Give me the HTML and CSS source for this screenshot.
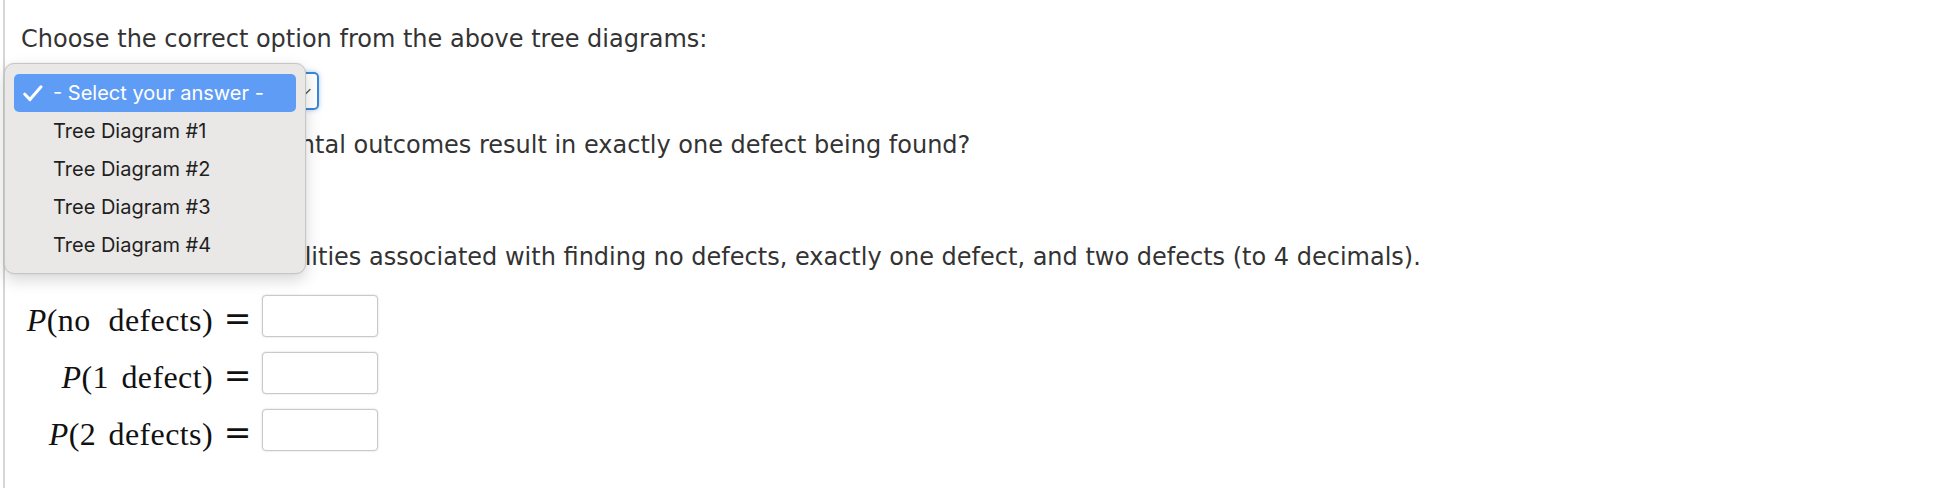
FILE: index.html
```html
<!DOCTYPE html>
<html lang="en">
<head>
<meta charset="utf-8">
<title>Tree diagrams question</title>
<link rel="stylesheet" href="styles.css">
</head>
<body>
<div class="page">
  <p class="q">Choose the correct option from the above tree diagrams:</p>
  <div class="select">
    <svg class="chev" width="11" height="8" viewBox="0 0 11 8"><path d="M1 1.5 L5.5 6 L10 1.5" fill="none" stroke="#555" stroke-width="1.4" stroke-linecap="round" stroke-linejoin="round"/></svg>
  </div>
  <p class="q q-gap">b. How many experimental outcomes result in exactly one defect being found?</p>
  <div class="answer"></div>
  <p class="q q-gap">c. Compute the probabilities associated with finding no defects, exactly one defect, and two defects (to 4 decimals).</p>
  <div class="math">
    <div class="lbl"><span class="it">P</span>(no<span class="wsp"></span>defects)</div>
    <div class="eq">=</div>
    <div class="box"></div>
    <div class="lbl"><span class="it">P</span>(1 defect)</div>
    <div class="eq">=</div>
    <div class="box"></div>
    <div class="lbl"><span class="it">P</span>(2 defects)</div>
    <div class="eq">=</div>
    <div class="box"></div>
  </div>
</div>
<div class="menu">
  <div class="opt sel">
    <span class="mark"><svg width="20" height="17" viewBox="0 0 20 17"><path d="M1.8 9.2 L7 14.6 L18 1.8" fill="none" stroke="#fff" stroke-width="3" stroke-linecap="round" stroke-linejoin="round"/></svg></span>
    <span>- Select your answer -</span>
  </div>
  <div class="opt"><span class="mark"></span><span>Tree Diagram #1</span></div>
  <div class="opt"><span class="mark"></span><span>Tree Diagram #2</span></div>
  <div class="opt"><span class="mark"></span><span>Tree Diagram #3</span></div>
  <div class="opt"><span class="mark"></span><span>Tree Diagram #4</span></div>
</div>
</body>
</html>
```
FILE: styles.css
```css
html, body {
  margin: 0;
  padding: 0;
  background: #ffffff;
}
body {
  position: relative;
  min-height: 488px;
}
.page {
  margin-left: 3px;
  border-left: 2px solid #d6d6d6;
  min-height: 488px;
  padding: 21px 0 0 16px;
  box-sizing: border-box;
  font-family: "DejaVu Sans", Verdana, sans-serif;
  font-size: 24px;
  color: #333333;
}
.q {
  margin: 0;
  line-height: 36px;
  white-space: nowrap;
}
.q-gap {
  margin-top: 17px;
}
.select {
  margin-top: 15px;
  width: 298px;
  height: 38px;
  box-sizing: border-box;
  border: 2px solid #3b86d6;
  border-radius: 5px;
  box-shadow: 0 0 5px rgba(59, 134, 214, 0.45);
  display: flex;
  align-items: center;
  justify-content: flex-end;
  padding: 0 6px 0 10px;
}
.chev {
  display: block;
  margin-top: 2px;
}
.answer {
  margin-top: 17px;
  width: 116px;
  height: 42px;
  box-sizing: border-box;
  border: 1px solid #c8c8c8;
  border-radius: 4px;
}
.math {
  margin-top: 20px;
  display: grid;
  grid-template-columns: 192px 23px 116px;
  column-gap: 10px;
  row-gap: 15px;
  grid-auto-rows: 42px;
  font-family: "Liberation Serif", "Times New Roman", serif;
  font-size: 32px;
  color: #111111;
}
.lbl {
  text-align: right;
  line-height: 42px;
  height: 42px;
  padding-top: 4px;
  box-sizing: border-box;
  white-space: nowrap;
  letter-spacing: 0.4px;
  word-spacing: 4px;
}
.it {
  font-style: italic;
}
.wsp {
  display: inline-block;
  width: 18px;
}
.eq {
  font-family: "DejaVu Serif", serif;
  font-size: 33px;
  line-height: 42px;
  height: 42px;
  padding-top: 3px;
  box-sizing: border-box;
  text-align: center;
  margin-right: -6px;
}
.box {
  width: 116px;
  height: 42px;
  margin-left: 6px;
  box-sizing: border-box;
  border: 1px solid #c9c9c9;
  border-radius: 4px;
  background: #fff;
  box-shadow: 0 0 2px rgba(0, 0, 0, 0.18);
}
.menu {
  position: absolute;
  left: 4px;
  top: 63px;
  width: 302px;
  box-sizing: border-box;
  padding: 10px 9px 9px 9px;
  background: #e9e8e7;
  border: 1px solid #c6c6c6;
  border-radius: 10px;
  box-shadow: 0 6px 16px rgba(0, 0, 0, 0.16), 0 0 2px rgba(0, 0, 0, 0.1);
  font-family: Inter, "Noto Sans", sans-serif;
  font-size: 20px;
  color: #1f1f1f;
}
.opt {
  height: 38px;
  line-height: 38px;
  display: flex;
  align-items: center;
  padding-left: 9px;
  border-radius: 5px;
  white-space: nowrap;
}
.opt.sel {
  background: #5f9cf5;
  color: #ffffff;
}
.mark {
  width: 30px;
  flex: none;
  display: flex;
  align-items: center;
}
.mark svg {
  display: block;
  margin-top: 1px;
}
```
